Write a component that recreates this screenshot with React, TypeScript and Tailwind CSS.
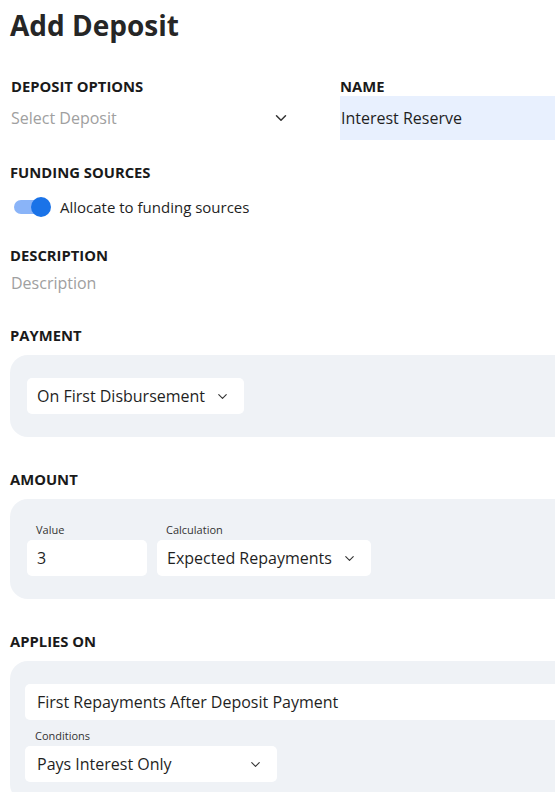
import React from 'react';
import { ChevronDown } from 'lucide-react';

const Label = ({ children, className = '' }: { children: React.ReactNode; className?: string }) => (
  <div className={`text-[14.8px] font-bold leading-[20px] text-[#1a1a1a] ${className}`}>{children}</div>
);

const SmallLabel = ({ children }: { children: React.ReactNode }) => (
  <div className="text-[11px] leading-[16px] text-[#333] pl-[9px] mb-[2px]">{children}</div>
);

const SelectBox = ({ value, className = '' }: { value: string; className?: string }) => (
  <div className={`h-[36px] bg-white rounded-[5px] flex items-center justify-between pl-[10px] pr-[14px] text-[16px] text-[#1f1f1f] ${className}`}>
    <span>{value}</span>
    <ChevronDown className="w-[15px] h-[15px] text-[#333]" strokeWidth={1.8} />
  </div>
);

export default function App() {
  return (
    <div className="w-[555px] h-[792px] overflow-hidden bg-white font-['Open_Sans',sans-serif]">
      <div className="w-[700px] pl-[10px]">
        <h1 className="text-[28px] font-bold leading-[38px] pt-[6px] text-[#262626]">Add Deposit</h1>

        <div className="flex mt-[32px]">
          <div className="w-[330px]">
            <Label className="pl-[1px]">DEPOSIT OPTIONS</Label>
            <div className="h-[44px] w-[280px] flex items-center justify-between pl-[1px] text-[16px] text-[#a0a0a0]">
              <span>Select Deposit</span>
              <ChevronDown className="w-[18px] h-[18px] text-[#333]" strokeWidth={2} />
            </div>
          </div>
          <div className="flex-1">
            <Label>NAME</Label>
            <div className="h-[44px] bg-[#e8f0fe] flex items-center pl-[1px] text-[16px] text-[#1f1f1f]">
              Interest Reserve
            </div>
          </div>
        </div>

        <Label className="mt-[22px]">FUNDING SOURCES</Label>
        <div className="mt-[13px] h-[24px] flex items-center">
          <div className="relative w-[37px] h-[20px] ml-[4px] flex items-center">
            <div className="w-[36px] h-[14px] rounded-full bg-[#8ab4f8]" />
            <div className="absolute right-0 top-0 w-[20px] h-[20px] rounded-full bg-[#1a73e8]" />
          </div>
          <span className="ml-[9px] text-[15px] text-[#1f1f1f]">Allocate to funding sources</span>
        </div>

        <Label className="mt-[26px]">DESCRIPTION</Label>
        <div className="h-[36px] flex items-center pl-[1px] text-[16px] text-[#a0a0a0]">Description</div>

        <Label className="mt-[24px]">PAYMENT</Label>
        <div className="mt-[10px] bg-[#eff2f6] rounded-l-[18px] py-[23px] pl-[17px]">
          <SelectBox value="On First Disbursement" className="w-[217px]" />
        </div>

        <Label className="mt-[32px]">AMOUNT</Label>
        <div className="mt-[10px] bg-[#eff2f6] rounded-l-[18px] py-[23px] pl-[17px] flex gap-[10px]">
          <div>
            <SmallLabel>Value</SmallLabel>
            <div className="h-[36px] w-[120px] bg-white rounded-[5px] flex items-center pl-[10px] text-[16px] text-[#1f1f1f]">3</div>
          </div>
          <div>
            <SmallLabel>Calculation</SmallLabel>
            <SelectBox value="Expected Repayments" className="w-[214px]" />
          </div>
        </div>

        <Label className="mt-[32px]">APPLIES ON</Label>
        <div className="mt-[10px] bg-[#eff2f6] rounded-l-[18px] pt-[23px] pb-[20px] pl-[15px]">
          <div className="h-[36px] bg-white rounded-l-[5px] flex items-center pl-[12px] text-[16px] text-[#1f1f1f]">
            First Repayments After Deposit Payment
          </div>
          <div className="mt-[8px]">
            <div className="text-[11px] leading-[16px] text-[#333] pl-[10px] mb-[2px]">Conditions</div>
            <SelectBox value="Pays Interest Only" className="w-[252px] pl-[12px]" />
          </div>
        </div>
      </div>
    </div>
  );
}
